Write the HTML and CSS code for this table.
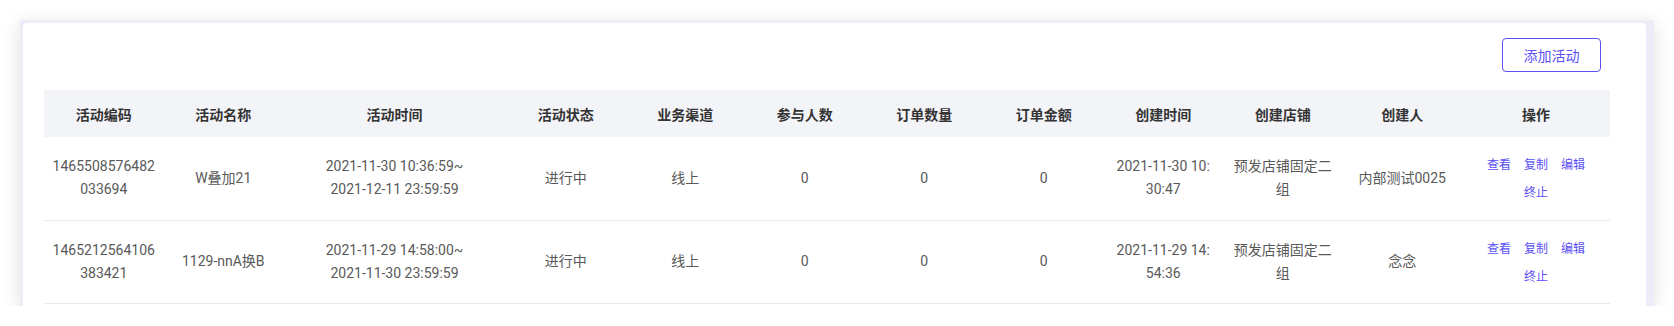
FILE: index.html
```html
<!DOCTYPE html>
<html lang="zh-CN">
<head>
<meta charset="utf-8">
<title>活动列表</title>
<link rel="stylesheet" href="styles.css">
</head>
<body>
<div class="page">
  <div class="frame">
    <div class="card">
      <div class="toolbar">
        <button class="btn-outline" type="button">添加活动</button>
      </div>
      <table class="grid">
        <colgroup>
          <col class="c-std"><col class="c-std"><col class="c-time"><col class="c-std"><col class="c-std"><col class="c-std"><col class="c-std"><col class="c-std"><col class="c-std"><col class="c-std"><col class="c-std"><col class="c-ops">
        </colgroup>
        <thead>
          <tr>
            <th>活动编码</th><th>活动名称</th><th>活动时间</th><th>活动状态</th><th>业务渠道</th><th>参与人数</th><th>订单数量</th><th>订单金额</th><th>创建时间</th><th>创建店铺</th><th>创建人</th><th>操作</th>
          </tr>
        </thead>
        <tbody>
          <tr>
            <td>1465508576482<br>033694</td>
            <td>W叠加21</td>
            <td>2021-11-30 10:36:59~<br>2021-12-11 23:59:59</td>
            <td>进行中</td>
            <td>线上</td>
            <td>0</td>
            <td>0</td>
            <td>0</td>
            <td>2021-11-30 10:<br>30:47</td>
            <td>预发店铺固定二<br>组</td>
            <td>内部测试0025</td>
            <td>
              <div class="actions">
                <a class="link">查看</a><a class="link">复制</a><a class="link">编辑</a><a class="link">终止</a>
              </div>
            </td>
          </tr>
          <tr>
            <td>1465212564106<br>383421</td>
            <td>1129-nnA换B</td>
            <td>2021-11-29 14:58:00~<br>2021-11-30 23:59:59</td>
            <td>进行中</td>
            <td>线上</td>
            <td>0</td>
            <td>0</td>
            <td>0</td>
            <td>2021-11-29 14:<br>54:36</td>
            <td>预发店铺固定二<br>组</td>
            <td>念念</td>
            <td>
              <div class="actions">
                <a class="link">查看</a><a class="link">复制</a><a class="link">编辑</a><a class="link">终止</a>
              </div>
            </td>
          </tr>
        </tbody>
      </table>
    </div>
  </div>
</div>
</body>
</html>
```

FILE: styles.css
```css
* { box-sizing: border-box; }

html, body {
  margin: 0;
  background: #ffffff;
}

body {
  font-family: Roboto, "Noto Sans CJK SC", sans-serif;
  color: #595959;
}

.page {
  padding: 20px 20px 0 20px;
}

.frame {
  background: #edecf8;
  padding: 3px 8px 0 3px;
  box-shadow: 0 4px 18px rgba(0, 0, 0, 0.13);
}

.card {
  background: #ffffff;
  border-radius: 4px 4px 0 0;
  padding: 15px 36px 2px 21px;
}

.toolbar {
  display: flex;
  justify-content: flex-end;
  padding-right: 9px;
  margin-bottom: 18px;
}

.btn-outline {
  width: 99px;
  height: 34px;
  border: 1px solid #5b4ff3;
  border-radius: 4px;
  background: #ffffff;
  color: #5b4ff3;
  font-family: "Noto Sans CJK SC", sans-serif;
  font-size: 14px;
  padding: 0;
  cursor: pointer;
}

.grid {
  width: 100%;
  border-collapse: collapse;
  table-layout: fixed;
}

.c-std { width: 119.5px; }
.c-time { width: 223px; }
.c-ops { width: 148px; }

.grid th {
  height: 47px;
  background: #f3f4f8;
  color: #333333;
  font-family: "Noto Sans CJK SC", sans-serif;
  font-weight: 700;
  font-size: 14px;
  text-align: center;
  padding: 0 8px;
}

.grid td {
  height: 83px;
  font-size: 14px;
  line-height: 23px;
  text-align: center;
  padding: 0 8px;
  border-bottom: 1px solid #e8eaf1;
  color: #595959;
}

.actions {
  width: 104px;
  margin: 0 auto;
  display: flex;
  flex-wrap: wrap;
  justify-content: center;
  gap: 4px 13px;
}

.link {
  font-family: "Noto Sans CJK SC", sans-serif;
  font-size: 12px;
  line-height: 24px;
  color: #5b4ff3;
  cursor: pointer;
}
```
